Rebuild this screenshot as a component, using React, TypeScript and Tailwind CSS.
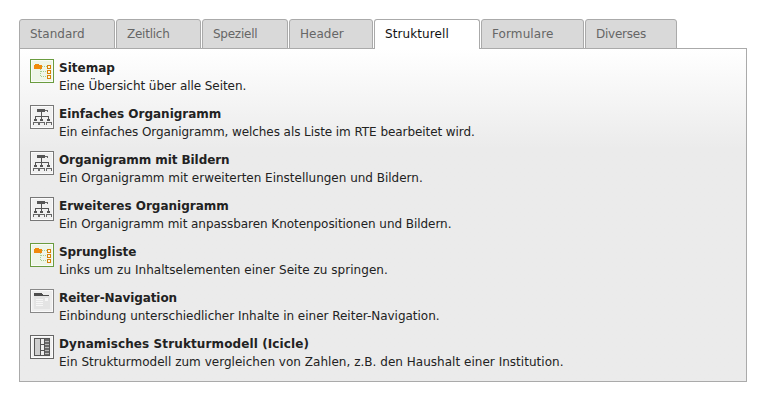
const tabs = [
  { label: "Standard", width: "w-[96px]", tracking: "" },
  { label: "Zeitlich", width: "w-[85px]", tracking: "tracking-[-0.25px]" },
  { label: "Speziell", width: "w-[86px]", tracking: "tracking-[-0.25px]" },
  { label: "Header", width: "w-[84px]", tracking: "" },
  { label: "Strukturell", width: "w-[106px]", tracking: "tracking-[0.1px]", active: true },
  { label: "Formulare", width: "w-[103px]", tracking: "tracking-[0.1px]" },
  { label: "Diverses", width: "w-[92px]", tracking: "tracking-[-0.25px]" },
];

function IconFrame({ border, fill, children }: { border: string; fill: string; children: React.ReactNode }) {
  return (
    <svg width="24" height="24" viewBox="0 0 24 24" className="block" shapeRendering="crispEdges">
      <rect x="0.5" y="0.5" width="23" height="23" fill={fill} stroke={border} />
      <rect x="1.5" y="1.5" width="21" height="21" fill="none" stroke="#fff" strokeOpacity="0.7" />
      {children}
    </svg>
  );
}

function SitemapIcon() {
  return (
    <IconFrame border="#6a9c3f" fill="#eef5e8">
      <path d="M4 6h1V5h4v1h3v4H4z" fill="#f08a0c" />
      <path d="M12 7.5h5M10.5 10v8M10.5 12.5h6.5M10.5 17.5h6.5" stroke="#a6cc8c" strokeDasharray="1 1" fill="none" />
      <rect x="17.5" y="6.5" width="3" height="3" fill="#fff6e0" stroke="#d98208" />
      <rect x="17.5" y="11.5" width="3" height="3" fill="#fff6e0" stroke="#d98208" />
      <rect x="17.5" y="16.5" width="3" height="3" fill="#fff6e0" stroke="#d98208" />
    </IconFrame>
  );
}

function OrgIcon() {
  return (
    <IconFrame border="#777" fill="#f0f0f0">
      <rect x="7" y="4" width="8" height="3" fill="#555" />
      <path d="M15 5.5h3M17 4.5v2" stroke="#666" fill="none" />
      <path d="M11.5 7v5M5.5 14v-2.5h13V14M11.5 12v2" stroke="#555" fill="none" />
      <rect x="4" y="14" width="3" height="2" fill="#555" />
      <rect x="10" y="14" width="3" height="2" fill="#555" />
      <rect x="17" y="14" width="3" height="2" fill="#555" />
      <path d="M3 20v-3h5v3M9 20v-3h5v3M16 20v-3h5v3" stroke="#666" fill="none" />
    </IconFrame>
  );
}

function TabsIcon() {
  return (
    <IconFrame border="#888" fill="#eeeeee">
      <path d="M4 7V4h8l1 2h4l3 1z" fill="#4d4d4d" />
      <rect x="4" y="7" width="16" height="13" fill="#e4e4e4" />
      <path d="M6 10h7M6 12h7M6 14h7M6 16h7" stroke="#f6f6f6" />
      <rect x="15" y="9" width="3" height="3" fill="#f6f6f6" />
    </IconFrame>
  );
}

function IcicleIcon() {
  return (
    <IconFrame border="#666" fill="#f0f0f0">
      <rect x="4.5" y="3.5" width="15" height="17" fill="#eee" stroke="#555" />
      <rect x="5" y="4" width="5" height="16" fill="#cfcfcf" />
      <path d="M10.5 4v16M10.5 9.5h4M10.5 15.5h4M14.5 4v16" stroke="#555" fill="none" />
      <rect x="15" y="4" width="4" height="16" fill="#6a6a6a" />
      <path d="M15 6.5h4M15 9.5h4M15 12.5h4M15 15.5h4M15 18.5h4" stroke="#bbb" />
    </IconFrame>
  );
}

const items = [
  {
    icon: <SitemapIcon />,
    title: "Sitemap",
    text: "Eine Übersicht über alle Seiten.",
    titleTrack: "",
    textTrack: "tracking-[-0.06px]",
  },
  {
    icon: <OrgIcon />,
    title: "Einfaches Organigramm",
    text: "Ein einfaches Organigramm, welches als Liste im RTE bearbeitet wird.",
    titleTrack: "",
    textTrack: "tracking-[-0.07px]",
  },
  {
    icon: <OrgIcon />,
    title: "Organigramm mit Bildern",
    text: "Ein Organigramm mit erweiterten Einstellungen und Bildern.",
    titleTrack: "tracking-[-0.08px]",
    textTrack: "tracking-[-0.01px]",
  },
  {
    icon: <OrgIcon />,
    title: "Erweiteres Organigramm",
    text: "Ein Organigramm mit anpassbaren Knotenpositionen und Bildern.",
    titleTrack: "",
    textTrack: "tracking-[-0.05px]",
  },
  {
    icon: <SitemapIcon />,
    title: "Sprungliste",
    text: "Links um zu Inhaltselementen einer Seite zu springen.",
    titleTrack: "tracking-[-0.08px]",
    textTrack: "tracking-[0.04px]",
  },
  {
    icon: <TabsIcon />,
    title: "Reiter-Navigation",
    text: "Einbindung unterschiedlicher Inhalte in einer Reiter-Navigation.",
    titleTrack: "tracking-[-0.1px]",
    textTrack: "tracking-[-0.015px]",
  },
  {
    icon: <IcicleIcon />,
    title: "Dynamisches Strukturmodell (Icicle)",
    text: "Ein Strukturmodell zum vergleichen von Zahlen, z.B. den Haushalt einer Institution.",
    titleTrack: "tracking-[0.11px]",
    textTrack: "tracking-[0.025px]",
  },
];

export default function App() {
  return (
    <div className="w-[765px] h-[400px] bg-white pt-[19px] pl-[19px] font-['DejaVu_Sans',Verdana,sans-serif] text-[12px] leading-[18px] text-[#222]">
      <div className="flex gap-px relative z-10 h-[30px]">
        {tabs.map((tab) => (
          <div
            key={tab.label}
            className={`${tab.width} ${tab.tracking} h-[30px] rounded-t-[3px] border border-[#aaa] pl-[10px] pt-[5px] ${
              tab.active ? "bg-white border-b-0 text-[#111]" : "bg-[#d9d9d9] text-[#666]"
            }`}
          >
            {tab.label}
          </div>
        ))}
      </div>
      <div className="w-[728px] h-[334px] -mt-px border border-[#aaa] bg-gradient-to-b from-white to-[#ebebeb] to-[30%] px-[10px] pt-[10px] flex flex-col gap-[10px]">
        {items.map((item) => (
          <div key={item.title} className="flex gap-[5px] h-[36px]">
            <div>{item.icon}</div>
            <div>
              <div className={`font-bold ${item.titleTrack}`}>{item.title}</div>
              <div className={item.textTrack}>{item.text}</div>
            </div>
          </div>
        ))}
      </div>
    </div>
  );
}
